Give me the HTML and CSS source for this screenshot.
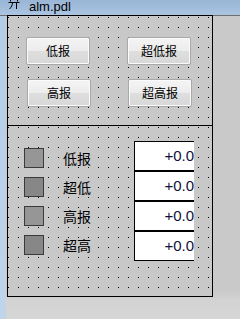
FILE: index.html
```html
<!DOCTYPE html>
<html>
<head>
<meta charset="utf-8">
<link rel="stylesheet" href="styles.css">
</head>
<body>
<div class="titlebar">
  <svg class="ticon" width="12" height="11" viewBox="0 0 12 11">
    <path d="M0.5 3.5H11.5M2.5 0.5V2.5M9.5 0.5V2.5M4.5 3.5C4.5 6 3.5 8 1.5 10M8.5 3.5V10" stroke="#000" stroke-width="1" fill="none"/>
  </svg>
  <span class="ttext">alm.pdl</span>
</div>
<div class="main">
  <div class="strip"></div>
  <div class="panel">
    <div class="upper">
      <button class="btn">低报</button>
      <button class="btn">超低报</button>
      <button class="btn shift">高报</button>
      <button class="btn shift">超高报</button>
    </div>
    <div class="lower">
      <div class="leds">
        <div class="row"><span class="sq a"></span><span class="lbl">低报</span></div>
        <div class="row"><span class="sq b"></span><span class="lbl">超低</span></div>
        <div class="row"><span class="sq a"></span><span class="lbl">高报</span></div>
        <div class="row"><span class="sq b"></span><span class="lbl">超高</span></div>
      </div>
      <div class="fields">
        <div class="field">+0.0</div>
        <div class="field">+0.0</div>
        <div class="field">+0.0</div>
        <div class="field">+0.0</div>
      </div>
    </div>
  </div>
</div>
</body>
</html>
```
FILE: styles.css
```css
html, body {
  margin: 0;
  padding: 0;
}
body {
  width: 240px;
  height: 319px;
  overflow: hidden;
  background: linear-gradient(#c9c9c9 0, #c9c9c9 290px, #d3d3d3 300px, #d6d6d6 319px);
  font-family: "Noto Sans CJK SC", "Liberation Sans", sans-serif;
}
.titlebar {
  height: 15px;
  background: linear-gradient(#9ab6d6, #aac4e1);
  display: flex;
  align-items: flex-start;
  overflow: hidden;
}
.ticon {
  margin-left: 8px;
  margin-top: -1px;
  flex: none;
}
.ttext {
  font-family: "Liberation Sans", sans-serif;
  font-size: 13px;
  line-height: 13px;
  margin-top: 0;
  margin-left: 9px;
  color: #000;
}
.main {
  display: flex;
  border-top: 1px solid #6e6e6e;
  height: 303px;
}
.strip {
  width: 6px;
  background: linear-gradient(#b4cce6, #c0d4ea);
  flex: none;
}
.panel {
  box-sizing: border-box;
  width: 206px;
  height: 282px;
  margin-left: 1px;
  margin-top: -1px;
  border: 1px solid #000;
  background-color: #c8c8c8;
  background-image: conic-gradient(at 1px 1px, transparent 75%, #000 0);
  background-size: 10px 10px;
  background-position: 0 1px;
  display: flex;
  flex-direction: column;
}
.upper {
  height: 110px;
  border-bottom: 1px solid #000;
  display: grid;
  grid-template-columns: 64px 64px;
  grid-template-rows: 28px 28px;
  column-gap: 37px;
  row-gap: 14px;
  padding: 21px 0 0 18px;
  box-sizing: border-box;
  align-content: start;
}
.btn {
  box-sizing: border-box;
  width: 64px;
  height: 28px;
  margin: 0;
  padding: 0;
  border: 1px solid #a8a8a8;
  border-radius: 2px;
  background: linear-gradient(#f4f4f4 0, #ececec 50%, #dedede 51%, #d8d8d8 100%);
  box-shadow: inset 0 0 0 1px #fbfbfb;
  font-family: "Noto Sans CJK SC", sans-serif;
  font-size: 12px;
  line-height: 14px;
  color: #000;
}
.shift {
  margin-left: 1px;
}
.lower {
  flex: 1;
  display: flex;
}
.leds {
  padding: 22px 0 0 16px;
  display: flex;
  flex-direction: column;
  gap: 9px;
}
.row {
  display: flex;
  align-items: center;
  height: 20px;
}
.sq {
  box-sizing: border-box;
  width: 20px;
  height: 20px;
  border: 1px solid #3a3a3a;
}
.sq.a { background: #969696; }
.sq.b { background: #878787; }
.lbl {
  margin-left: 19px;
  font-size: 14px;
  line-height: 16px;
  color: #000;
}
.fields {
  margin-left: auto;
  margin-right: 18px;
  padding-top: 15px;
  display: flex;
  flex-direction: column;
}
.field {
  box-sizing: border-box;
  width: 60px;
  height: 30px;
  background: #fff;
  border-left: 1px solid #000;
  border-top: 1px solid #000;
  border-bottom: 1px solid #000;
  text-align: right;
  font-family: "Liberation Sans", sans-serif;
  font-size: 15px;
  line-height: 28px;
  color: #10103a;
}
```
